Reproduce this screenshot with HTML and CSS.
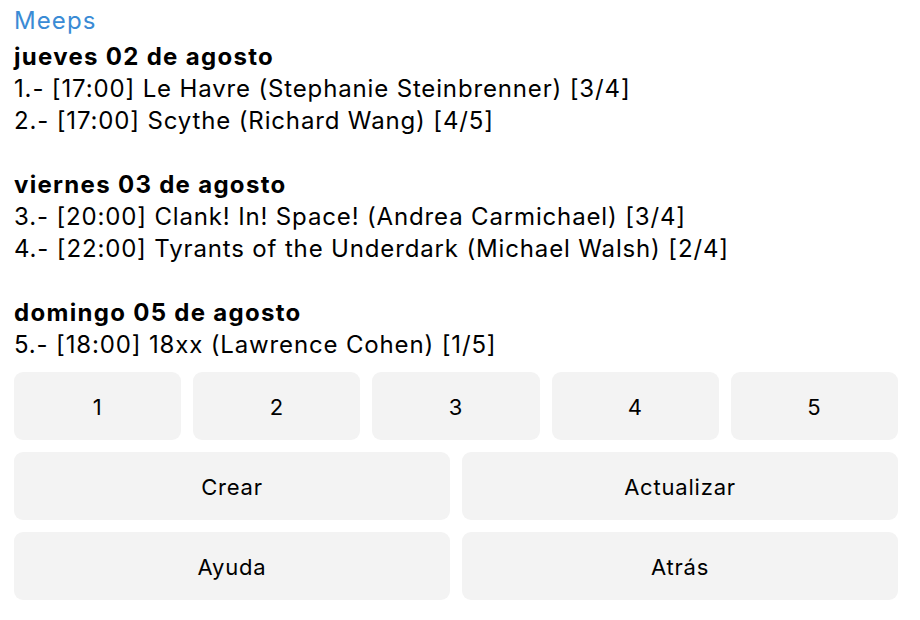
FILE: index.html
```html
<!DOCTYPE html>
<html lang="es">
<head>
<meta charset="utf-8">
<title>Meeps</title>
<link rel="stylesheet" href="styles.css">
</head>
<body>
<div class="message">
  <div class="sender">Meeps</div>
  <div class="text">
    <div class="day">jueves 02 de agosto</div>
    <div class="line">1.- [17:00] Le Havre (Stephanie Steinbrenner) [3/4]</div>
    <div class="line">2.- [17:00] Scythe (Richard Wang) [4/5]</div>
    <div class="blank"></div>
    <div class="day">viernes 03 de agosto</div>
    <div class="line">3.- [20:00] Clank! In! Space! (Andrea Carmichael) [3/4]</div>
    <div class="line">4.- [22:00] Tyrants of the Underdark (Michael Walsh) [2/4]</div>
    <div class="blank"></div>
    <div class="day">domingo 05 de agosto</div>
    <div class="line">5.- [18:00] 18xx (Lawrence Cohen) [1/5]</div>
  </div>
</div>
<div class="keyboard">
  <div class="row">
    <div class="btn">1</div>
    <div class="btn">2</div>
    <div class="btn">3</div>
    <div class="btn">4</div>
    <div class="btn">5</div>
  </div>
  <div class="row">
    <div class="btn">Crear</div>
    <div class="btn">Actualizar</div>
  </div>
  <div class="row">
    <div class="btn">Ayuda</div>
    <div class="btn">Atrás</div>
  </div>
</div>
</body>
</html>
```
FILE: styles.css
```css
html, body {
  margin: 0;
  padding: 0;
  background: #ffffff;
}
body {
  font-family: "Inter", "Liberation Sans", sans-serif;
  color: #000000;
  padding: 5px 22px 0 14px;
}
.sender {
  color: #3a8bd5;
  font-size: 24px;
  line-height: 32px;
  letter-spacing: 1.1px;
  margin-bottom: 4px;
}
.text {
  font-size: 24px;
  line-height: 32px;
  letter-spacing: 0.85px;
}
.day {
  font-weight: 700;
  letter-spacing: 1.3px;
}
.blank {
  height: 32px;
}
.keyboard {
  margin-top: 11px;
  display: flex;
  flex-direction: column;
  gap: 12px;
}
.row {
  display: flex;
  gap: 12px;
}
.btn {
  flex: 1 1 0;
  height: 68px;
  background: #f3f3f3;
  border-radius: 9px;
  display: flex;
  align-items: center;
  justify-content: center;
  font-size: 22px;
  letter-spacing: 0.8px;
  padding-top: 2px;
  box-sizing: border-box;
}
```
